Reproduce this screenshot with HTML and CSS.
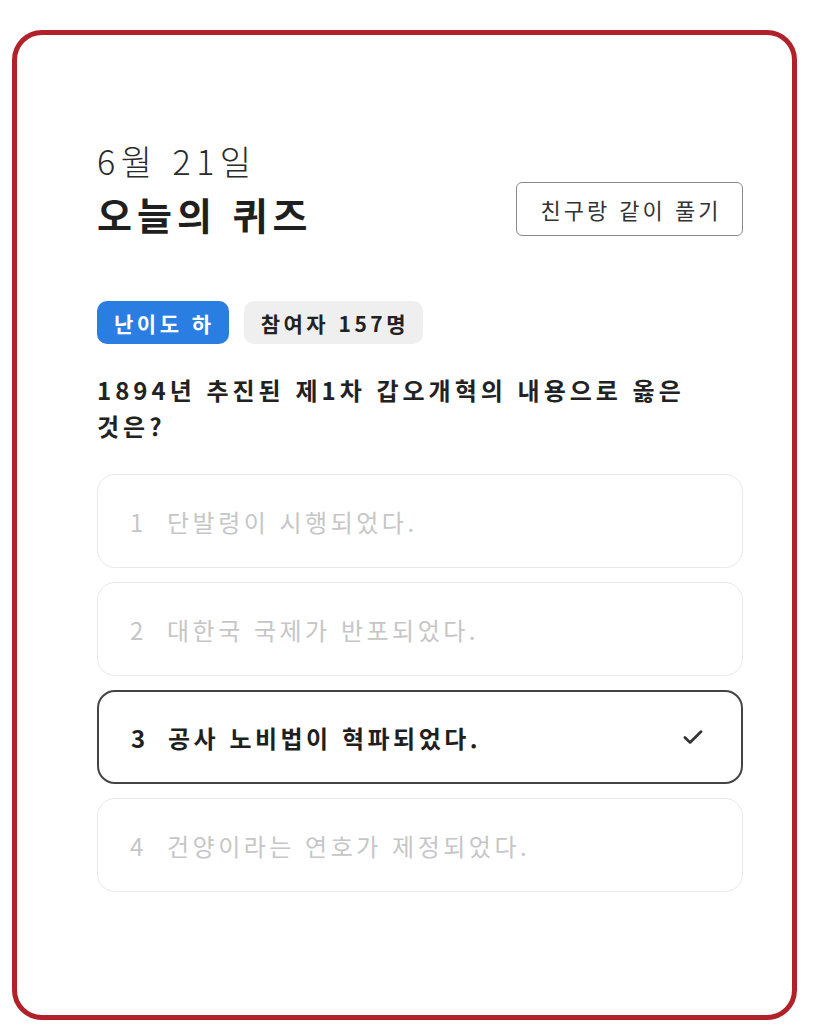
FILE: index.html
```html
<!DOCTYPE html>
<html lang="ko">
<head>
  <meta charset="UTF-8">
  <meta name="viewport" content="width=device-width, initial-scale=1.0">
  <title>오늘의 퀴즈</title>
  <link rel="stylesheet" href="styles.css">
</head>
<body>
  <div class="frame">
    <div class="header">
      <div class="titles">
        <p class="date">6월 21일</p>
        <h1>오늘의 퀴즈</h1>
      </div>
      <button class="share-button">친구랑 같이 풀기</button>
    </div>

    <div class="badges">
      <span class="badge level">난이도 하</span>
      <span class="badge count">참여자 157명</span>
    </div>

    <h2 class="question">1894년 추진된 제1차 갑오개혁의 내용으로 옳은 것은?</h2>

    <ul class="options">
      <li class="option"><span class="num">1</span><span class="label">단발령이 시행되었다.</span></li>
      <li class="option"><span class="num">2</span><span class="label">대한국 국제가 반포되었다.</span></li>
      <li class="option selected">
        <span class="num">3</span><span class="label">공사 노비법이 혁파되었다.</span>
        <svg class="check" width="26" height="26" viewBox="0 0 24 24" fill="none" stroke="#333" stroke-width="2.5" stroke-linecap="round" stroke-linejoin="round"><path d="M4.5 12.5l4.8 4.5L19.5 7"/></svg>
      </li>
      <li class="option"><span class="num">4</span><span class="label">건양이라는 연호가 제정되었다.</span></li>
    </ul>
  </div>
</body>
</html>
```

FILE: styles.css
```css
body {
  margin: 0;
  background: #ffffff;
  font-family: "Noto Sans CJK KR", "Noto Sans", sans-serif;
  color: #222222;
}

.frame {
  box-sizing: border-box;
  width: 785px;
  height: 990px;
  margin: 30px 0 0 12px;
  border: 5px solid #b0212a;
  border-radius: 30px;
  padding: 101px 49px 0 80px;
}

.header {
  display: flex;
  justify-content: space-between;
  align-items: flex-end;
}

.date {
  margin: 0;
  font-size: 34px;
  font-weight: 300;
  line-height: 50px;
  letter-spacing: 5.5px;
  color: #2a2a2a;
}

h1 {
  margin: 0;
  font-size: 38px;
  font-weight: 700;
  line-height: 56px;
  letter-spacing: 5px;
  color: #1f1f1f;
}

.share-button {
  height: 54px;
  width: 227px;
  margin-bottom: 6px;
  padding: 0 0 0 3px;
  border: 1.5px solid #8a8a8a;
  border-radius: 6px;
  background: #ffffff;
  font-family: inherit;
  font-size: 22px;
  letter-spacing: 3px;
  color: #333333;
}

.badges {
  display: flex;
  gap: 15px;
  margin-top: 59px;
}

.badge {
  display: inline-flex;
  align-items: center;
  height: 43px;
  padding: 0 14px 0 17px;
  border-radius: 10px;
  font-size: 21px;
  font-weight: 700;
  letter-spacing: 3.5px;
}

.level {
  background: #2a7de1;
  color: #ffffff;
}

.count {
  background: #efefef;
  color: #222222;
}

.question {
  max-width: 620px;
  margin: 28px 0 0;
  font-size: 24px;
  font-weight: 700;
  line-height: 36px;
  letter-spacing: 4px;
  color: #222222;
}

.options {
  list-style: none;
  margin: 30px 0 0;
  padding: 0;
  display: flex;
  flex-direction: column;
  gap: 14px;
}

.option {
  box-sizing: border-box;
  display: flex;
  align-items: center;
  height: 94px;
  padding: 0 35px 0 32px;
  border: 1.5px solid #e8e8e8;
  border-radius: 18px;
  font-size: 24px;
  letter-spacing: 3.5px;
  color: #c6c6c6;
}

.option .num {
  width: 37px;
  letter-spacing: 0;
}

.option.selected {
  border: 2px solid #444444;
  color: #1f1f1f;
  font-weight: 700;
}

.check {
  margin-left: auto;
}
```
